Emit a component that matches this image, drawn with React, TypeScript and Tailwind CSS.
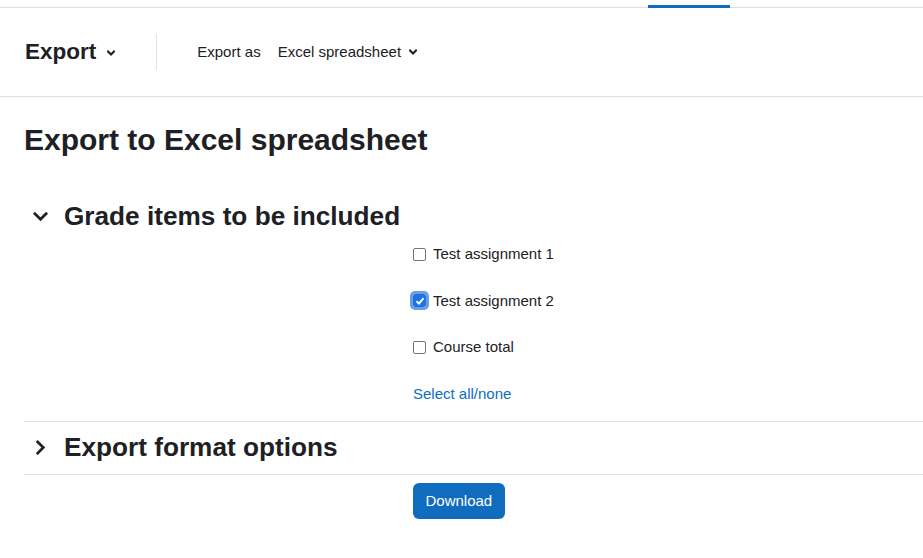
import { useState } from "react";

const font = "font-['Liberation_Sans',Arial,sans-serif]";

function Chevron({ dir = "down", size = 8, stroke = 2.2 }: { dir?: "down" | "right"; size?: number; stroke?: number }) {
  const points = dir === "down" ? "2,5 8,11 14,5" : "5,2 11,8 5,14";
  return (
    <svg width={size} height={size} viewBox="0 0 16 16" fill="none" stroke="#1d2125" strokeWidth={stroke * (16 / size)} strokeLinecap="square">
      <polyline points={points} />
    </svg>
  );
}

const items = [
  { id: "a1", label: "Test assignment 1", checked: false },
  { id: "a2", label: "Test assignment 2", checked: true },
  { id: "ct", label: "Course total", checked: false },
];

export default function App() {
  const [checked, setChecked] = useState<Record<string, boolean>>(
    Object.fromEntries(items.map((i) => [i.id, i.checked]))
  );

  return (
    <div className={`${font} min-h-[558px] w-[923px] bg-white text-[#1d2125]`}>
      {/* nav strip */}
      <div className="flex h-[8px]">
        <div className="w-[648px] border-b border-[#dee2e6]" />
        <div className="h-[3px] w-[82px] self-end bg-[#0f6cbf]" />
        <div className="flex-1 border-b border-[#dee2e6]" />
      </div>

      {/* tertiary navigation */}
      <div className="flex h-[89px] items-center border-b border-[#dee2e6] pl-[25px]">
        <button className="flex items-center gap-[11px] text-[22.5px] font-bold leading-none">
          Export
          <span className="mt-[2px]"><Chevron size={8} stroke={2.2} /></span>
        </button>
        <div className="ml-[41px] h-[36px] w-px bg-[#dee2e6]" />
        <span className="ml-[40px] text-[15px]">Export as</span>
        <button className="ml-[17px] flex items-center gap-[8px] text-[15px]">
          Excel spreadsheet
          <Chevron size={8} stroke={2.2} />
        </button>
      </div>

      <div className="pl-6">
        <h2 className="mt-[25px] text-[30px] font-bold leading-[1.2]">Export to Excel spreadsheet</h2>

        {/* Grade items section */}
        <div className="mt-[43px] flex items-center">
          <span className="ml-[9px] w-[31px]"><Chevron size={15} stroke={2.7} /></span>
          <h3 className="text-[26.2px] font-bold leading-[1.2]">Grade items to be included</h3>
        </div>

        <div className="mt-[10.5px] flex flex-col gap-[23.5px] pl-[389px] text-[15px]">
          {items.map((it) => {
            const on = checked[it.id];
            return (
              <label key={it.id} className="flex h-[23px] cursor-pointer items-center">
                <span
                  onClick={() => setChecked((c) => ({ ...c, [it.id]: !c[it.id] }))}
                  className={
                    on
                      ? "flex h-[13px] w-[13px] items-center justify-center rounded-[2px] bg-[#1a73e8] outline-[3.5px] outline-solid outline-[#6d9fd8]"
                      : "h-[13px] w-[13px] rounded-[2px] border border-[#767676] bg-white"
                  }
                >
                  {on && (
                    <svg width="10" height="10" viewBox="0 0 10 10" fill="none" stroke="white" strokeWidth="2">
                      <polyline points="1.5,5.2 4,7.6 8.6,2.2" />
                    </svg>
                  )}
                </span>
                <span className="ml-[7px]">{it.label}</span>
              </label>
            );
          })}
          <a href="#" className="flex h-[23px] items-center text-[#0f6cbf]">Select all/none</a>
        </div>

        {/* Export format options */}
        <div className="mt-[15.5px] flex items-center border-y border-[#dee2e6] pb-[11px] pt-[10px]">
          <span className="ml-[9px] w-[31px]"><Chevron dir="right" size={15} stroke={2.7} /></span>
          <h3 className="text-[26.2px] font-bold leading-[1.2]">Export format options</h3>
        </div>

        <div className="mt-[8px] pl-[389px]">
          <button className="h-9 rounded-[6px] bg-[#0f6cbf] px-[12.5px] text-[15px] text-white">Download</button>
        </div>
      </div>
    </div>
  );
}
